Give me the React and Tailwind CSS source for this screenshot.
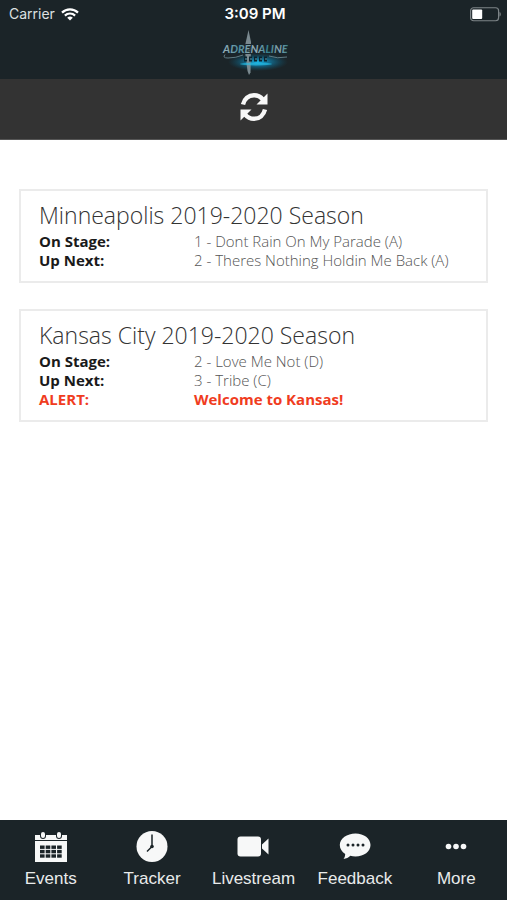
import { useState } from "react";

const SEASONS = [
  {
    name: "Minneapolis 2019-2020 Season",
    onStage: "1 - Dont Rain On My Parade (A)",
    upNext: "2 - Theres Nothing Holdin Me Back (A)",
  },
  {
    name: "Kansas City 2019-2020 Season",
    onStage: "2 - Love Me Not (D)",
    upNext: "3 - Tribe (C)",
    alert: "Welcome to Kansas!",
  },
];

const TABS = [
  { label: "Events",     Icon: CalendarIcon },
  { label: "Tracker",    Icon: ClockIcon },
  { label: "Livestream", Icon: CameraIcon },
  { label: "Feedback",   Icon: BubbleIcon },
  { label: "More",       Icon: DotsIcon },
];

function WifiIcon() {
  return (
    <svg width="18" height="13" viewBox="0 0 18 13" fill="none" stroke="#fff" strokeWidth="2.2">
      <path d="M1 4.6a11.4 11.4 0 0 1 16 0" />
      <path d="M3.9 7.6a7.2 7.2 0 0 1 10.2 0" />
      <path d="M9 12.6 6.2 9.8a4 4 0 0 1 5.6 0z" fill="#fff" stroke="none" />
    </svg>
  );
}

function BatteryIcon() {
  return (
    <svg width="32" height="15" viewBox="0 0 32 15">
      <rect x="1.6" y="0.75" width="28" height="13" rx="3" fill="none" stroke="#7d8487" strokeWidth="1.2" />
      <rect x="3.2" y="2.4" width="10" height="9.7" rx="1" fill="#fff" />
      <path d="M30.5 5v4.6c.8-.3 1.3-1.2 1.3-2.3S31.3 5.3 30.5 5z" fill="#7d8487" />
    </svg>
  );
}

function Logo() {
  return (
    <svg width="74" height="48" viewBox="0 0 74 48" role="img" aria-label="Adrenaline">
      <defs>
        <radialGradient id="glow">
          <stop offset="0" stopColor="#19b5e8" />
          <stop offset="0.4" stopColor="#0f86b4" stopOpacity="0.7" />
          <stop offset="1" stopColor="#0b5a78" stopOpacity="0" />
        </radialGradient>
        <linearGradient id="letters">
          <stop offset="0" stopColor="#a3b3ba" />
          <stop offset="0.25" stopColor="#4f8d9c" />
          <stop offset="0.5" stopColor="#9cb0b7" />
          <stop offset="0.7" stopColor="#2f7d8a" />
          <stop offset="0.85" stopColor="#93a8b0" />
          <stop offset="1" stopColor="#327f89" />
        </linearGradient>
      </defs>
      <ellipse cx="41" cy="34" rx="30" ry="9" fill="url(#glow)" />
      <path d="M31.5 2 34 14 33.5 44.5 32 47 30.5 43 27.5 20z" fill="#7b8a90" />
      <path d="M8 26.500q-3 3.500 3 3.500 8 0 15-3M52 28q8 3 18 1" fill="none" stroke="#607b84" strokeWidth="1" />
      <text
        x="6" y="25" fontFamily="Lato, sans-serif" fontStyle="italic" fontSize="11" fontWeight="700"
        fill="url(#letters)" stroke="#17262e" strokeWidth="2" paintOrder="stroke"
      >
        ADRENALINE
      </text>
      <ellipse cx="39" cy="36" rx="16" ry="1.5" fill="#27c6f2" opacity="0.6" />
      <path d="M27 31h23" stroke="#0b222d" strokeWidth="5" strokeDasharray="3 2" />
      <path d="M28 31h22" stroke="#5f9fb3" strokeWidth="1" strokeDasharray="2 3" />
    </svg>
  );
}

function RefreshIcon() {
  return (
    <svg width="28" height="30" viewBox="0 0 28 30" fill="none" stroke="#f7f7f7" strokeWidth="4.4">
      <path d="M3 12.5C4.3 7 8.6 3.2 14 3.2c3.5 0 6.6 1.5 8.8 4.2" />
      <path d="M25 17.5C23.7 23 19.4 26.8 14 26.8c-3.5 0-6.6-1.500-8.800-4.200" />
      <path d="M27.5 1.5v11H16.5z" fill="#f7f7f7" stroke="none" />
      <path d="M.5 28.5v-11h11z" fill="#f7f7f7" stroke="none" />
    </svg>
  );
}

function CalendarIcon() {
  return (
    <svg width="32" height="32" viewBox="0 0 32 32">
      <path d="M0 4h32v27H0z" fill="#f7f8f8" />
      <path d="M0 9.5h32" stroke="#1b2428" strokeWidth="1" />
      {[8, 24].map((x) => (
        <g key={x}>
          <rect x={x - 3} y="0" width="6" height="8" rx="3" fill="#1b2428" />
          <rect x={x - 2} y="1" width="4" height="6" rx="2" fill="#f7f8f8" />
        </g>
      ))}
      {[14.5, 18.9, 23.3].map((y) =>
        [5, 10.7, 16.4, 22.1].map((x) => (
          <rect key={`${x}-${y}`} x={x} y={y} width="4.6" height="3.4" fill="#1b2428" />
        ))
      )}
    </svg>
  );
}

function ClockIcon() {
  return (
    <svg width="32" height="32" viewBox="0 0 32 32">
      <circle cx="16" cy="15.5" r="15.5" fill="#f7f8f8" />
      <path d="M16 3.5v12l-5 5" fill="none" stroke="#1b2428" strokeWidth="1.5" />
      <circle cx="16" cy="15.5" r="1.8" fill="#1b2428" />
    </svg>
  );
}

function CameraIcon() {
  return (
    <svg width="32" height="32" viewBox="0 0 32 32" fill="#f7f8f8">
      <rect x="0.5" y="5.5" width="23.5" height="20" rx="3" />
      <path d="M25 13.5 31.5 7.5v16L25 17.5z" />
    </svg>
  );
}

function BubbleIcon() {
  return (
    <svg width="32" height="32" viewBox="0 0 32 32">
      <path
        d="M16.5 2.5C25 2.5 31.5 7.5 31.5 14S25 25.5 16.5 25.5c-1.8 0-3.6-.2-5.2-.7-1.8 1.8-4 3-6.8 3.2 1.1-1.6 1.7-3.3 1.7-5.1C2.9 20.8.8 17.7.8 14 .8 7.5 8 2.5 16.5 2.5z"
        fill="#f7f8f8"
      />
      {[9, 14, 19, 24].map((x) => (
        <circle key={x} cx={x} cy="14" r="1.5" fill="#1b2428" />
      ))}
    </svg>
  );
}

function DotsIcon() {
  return (
    <svg width="32" height="32" viewBox="0 0 32 32" fill="#f7f8f8">
      <circle cx="8.5" cy="15.5" r="2.8" />
      <circle cx="16" cy="15.5" r="2.8" />
      <circle cx="23.5" cy="15.5" r="2.8" />
    </svg>
  );
}

function SeasonCard({ season }) {
  return (
    <section className="border-2 border-[#ebebeb] px-[18px] pt-2 pb-[11px]">
      <h2 className="mb-px text-[23px] leading-8 font-light text-[#333333]">{season.name}</h2>
      <dl className="grid grid-cols-[155px_1fr] text-[15px] leading-[19px] text-[#555555]">
        <dt className="font-bold text-[#1a1a1a]">On Stage:</dt>
        <dd className="font-light">{season.onStage}</dd>
        <dt className="font-bold text-[#1a1a1a]">Up Next:</dt>
        <dd className="font-light">{season.upNext}</dd>
        {season.alert && (
          <>
            <dt className="font-bold text-[#f03c1e]">ALERT:</dt>
            <dd className="font-bold text-[#f03c1e]">{season.alert}</dd>
          </>
        )}
      </dl>
    </section>
  );
}

export default function App() {
  const [active, setActive] = useState("Events");

  return (
    <div className="flex min-h-screen flex-col bg-white font-['Open_Sans',sans-serif]">
      {/* Status bar and logo */}
      <header className="bg-[#1b2428] font-[Inter,sans-serif] text-white">
        <div className="grid h-7 grid-cols-3 items-center pr-[6px] pl-[9px]">
          <div className="flex items-center gap-[6px] text-sm text-[#dde0e1]">
            Carrier
            <WifiIcon />
          </div>
          <div className="text-center text-[15px] font-semibold">3:09 PM</div>
          <div className="flex justify-end">
            <BatteryIcon />
          </div>
        </div>
        <div className="flex h-[51px] justify-center">
          <Logo />
        </div>
      </header>

      <div className="flex h-[61px] items-center justify-center border-b border-[#555555] bg-[#333333] pb-1">
        <button type="button" aria-label="Refresh" className="cursor-pointer">
          <RefreshIcon />
        </button>
      </div>

      <main className="flex flex-1 flex-col gap-[26px] px-[19px] pt-[49px] pb-6">
        {SEASONS.map((season) => (
          <SeasonCard key={season.name} season={season} />
        ))}
      </main>

      {/* Tab bar */}
      <nav className="grid h-20 grid-cols-5 bg-[#1b2428] pt-[11px] font-['Liberation_Sans',sans-serif]">
        {TABS.map(({ label, Icon }) => (
          <button
            key={label}
            type="button"
            aria-pressed={active === label}
            onClick={() => setActive(label)}
            className="flex cursor-pointer flex-col items-center gap-1 text-[17px] leading-6 text-[#e9ebeb]"
          >
            <Icon />
            {label}
          </button>
        ))}
      </nav>
    </div>
  );
}
